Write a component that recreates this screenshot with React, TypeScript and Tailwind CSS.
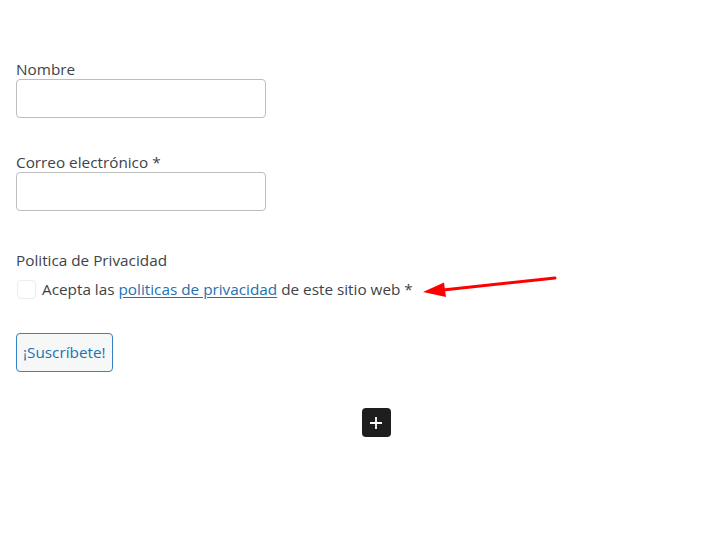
export default function App() {
  return (
    <div className="min-h-[543px] w-[714px] bg-white pl-4 pt-[59px] font-['Open_Sans',sans-serif] text-[15.3px] text-[#3c434a]">
      <label className="block leading-5">Nombre</label>
      <input
        type="text"
        className="box-border h-[39px] w-[250px] rounded border border-[#bdbdbd] bg-white"
      />

      <label className="mt-[34px] block leading-5">Correo electrónico *</label>
      <input
        type="email"
        className="box-border h-[39px] w-[250px] rounded border border-[#bdbdbd] bg-white"
      />

      <p className="mt-[39px] leading-5">Politica de Privacidad</p>
      <div className="relative mt-[9px] flex items-center gap-[6px]">
        <span className="ml-px h-[19px] w-[19px] rounded border border-[#ececec] bg-white" />
        <span className="leading-5">
          Acepta las{' '}
          <a href="#" className="text-[#2271b1] underline decoration-[#2271b1] underline-offset-2">
            politicas de privacidad
          </a>{' '}
          de este sitio web *
        </span>
        <svg
          className="absolute left-[405px] top-[-3px]"
          width="140"
          height="24"
          viewBox="0 0 140 24"
        >
          <line x1="134" y1="2" x2="22" y2="14" stroke="#ff0000" strokeWidth="3" strokeLinecap="round" />
          <polygon points="2,16 23,6.5 25,21" fill="#ff0000" />
        </svg>
      </div>

      <button className="mt-[34px] block h-[39px] rounded border border-[#3582c4] bg-[#f6f7f7] px-[6px] text-[#2271b1]">
        ¡Suscríbete!
      </button>

      <div className="mt-[36px] flex w-[682px] justify-center">
        <button className="ml-[38px] flex h-[29px] w-[29px] items-center justify-center rounded-sm bg-[#1e1e1e]">
          <svg width="16" height="16" viewBox="0 0 16 16">
            <path d="M8 2v12M2 8h12" stroke="#fff" strokeWidth="1.8" />
          </svg>
        </button>
      </div>
    </div>
  )
}
